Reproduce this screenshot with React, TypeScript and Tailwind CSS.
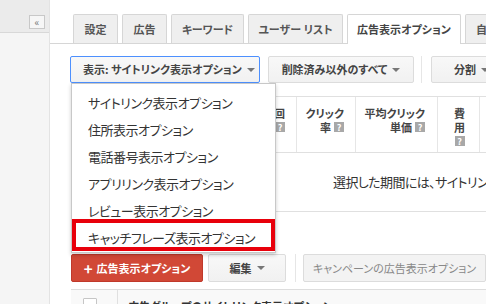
import React from "react";

const Q = () => (
  <span className="inline-flex items-center justify-center w-[10px] h-[10px] shrink-0 bg-[#a8a8a8] text-white text-[9px] leading-none font-bold">?</span>
);

const Caret = () => (
  <span className="inline-block ml-[5px] w-0 h-0 border-l-[4px] border-r-[4px] border-t-[4px] border-l-transparent border-r-transparent border-t-[#777] align-middle" />
);

const HeadCell = ({ w, pr, l1, l2 }: { w: string; pr: string; l1: string; l2: string }) => (
  <div className={`${w} ${pr} shrink-0 border-r border-[#e6e6e6] flex flex-col items-end pt-[9px]`}>
    <div className="h-[14px] flex items-center whitespace-nowrap">{l1}</div>
    <div className="h-[14px] flex items-center gap-[3px] whitespace-nowrap">
      <span>{l2}</span>
      <Q />
    </div>
  </div>
);

export default function App() {
  const items = [
    "サイトリンク表示オプション",
    "住所表示オプション",
    "電話番号表示オプション",
    "アプリリンク表示オプション",
    "レビュー表示オプション",
  ];
  return (
    <div className="w-[486px] h-[304px] overflow-hidden flex bg-white font-['Noto_Sans_CJK_JP',sans-serif] [font-feature-settings:'palt'] text-[#333]">
      {/* sidebar */}
      <div className="w-[50px] shrink-0 flex flex-col border-r border-[#e3e3e3]">
        <div className="h-[33px] bg-[#ebebeb] border-b border-[#d8d8d8] flex justify-end items-start pt-[15px] pr-[4px]">
          <div className="w-[16px] h-[14px] border border-[#c8c8c8] bg-[#f6f6f6] flex items-center justify-center text-[10px] leading-none text-[#777]">«</div>
        </div>
        <div className="flex-1 bg-[#f5f5f5]" />
      </div>

      {/* main */}
      <div className="relative flex-1 flex flex-col min-w-0 overflow-hidden">
        {/* tabs */}
        <div className="h-[44px] shrink-0 border-b border-[#d6d6d6] flex items-end gap-[4px] pl-[23px] text-[11px] font-bold text-[#555]">
          <div className="w-[45px] shrink-0 h-[29px] bg-[#efefef] border border-b-0 border-[#d6d6d6] rounded-t-[2px] flex items-center justify-center">設定</div>
          <div className="w-[45px] shrink-0 h-[29px] bg-[#efefef] border border-b-0 border-[#d6d6d6] rounded-t-[2px] flex items-center justify-center">広告</div>
          <div className="w-[73px] shrink-0 h-[29px] bg-[#efefef] border border-b-0 border-[#d6d6d6] rounded-t-[2px] flex items-center justify-center">キーワード</div>
          <div className="w-[95px] shrink-0 h-[29px] bg-[#efefef] border border-b-0 border-[#d6d6d6] rounded-t-[2px] flex items-center justify-center">ユーザー リスト</div>
          <div className="w-[114px] shrink-0 h-[30px] -mb-px bg-white border border-b-0 border-[#d6d6d6] rounded-t-[2px] flex items-center justify-center text-[#444]">広告表示オプション</div>
          <div className="w-[70px] shrink-0 h-[29px] bg-[#efefef] border border-b-0 border-[#d6d6d6] rounded-t-[2px] flex items-center pl-[10px] whitespace-nowrap">自動入札</div>
        </div>

        {/* toolbar */}
        <div className="mt-[12px] h-[27px] shrink-0 flex items-stretch pl-[20px] text-[11px] font-bold text-[#444]">
          <div className="w-[190px] shrink-0 border border-[#4d90fe] rounded-[2px] bg-gradient-to-b from-[#f8f8f8] to-[#f1f1f1] flex items-center pl-[12px]">
            表示: サイトリンク表示オプション<Caret />
          </div>
          <div className="ml-[8px] w-[146px] shrink-0 border border-[#dcdcdc] rounded-[2px] bg-gradient-to-b from-[#f8f8f8] to-[#f1f1f1] flex items-center justify-center">
            削除済み以外のすべて<Caret />
          </div>
          <div className="ml-[7px] w-px shrink-0 bg-[#e6e6e6]" />
          <div className="ml-[9px] w-[80px] shrink-0 border border-[#dcdcdc] rounded-[2px] bg-gradient-to-b from-[#f8f8f8] to-[#f1f1f1] flex items-center pl-[22px]">
            分割<Caret />
          </div>
        </div>

        {/* table header */}
        <div className="mt-[13px] ml-[21px] h-[57px] shrink-0 border-t border-b border-[#e0e0e0] flex text-[11px] leading-[13px] font-bold text-[#444]">
          <HeadCell w="w-[226px]" pr="pr-[11px]" l1="表示回" l2="数" />
          <HeadCell w="w-[59px]" pr="pr-[11px]" l1="クリック" l2="率" />
          <HeadCell w="w-[82px]" pr="pr-[12px]" l1="平均クリック" l2="単価" />
          <div className="w-[42px] shrink-0 border-r border-[#e6e6e6] flex flex-col items-center pt-[9px] pl-[2px]">
            <div className="h-[14px] flex items-center">費</div>
            <div className="h-[14px] flex items-center">用</div>
            <div className="h-[14px] flex items-center"><Q /></div>
          </div>
          <div className="flex-1" />
        </div>

        {/* empty message */}
        <div className="ml-[21px] h-[59px] shrink-0 border-b border-[#e0e0e0] flex items-center pl-[262px] text-[13px] tracking-[-0.6px] text-[#333] whitespace-nowrap overflow-hidden">
          選択した期間には、サイトリンク表示オプションはありません。
        </div>

        {/* bottom toolbar */}
        <div className="mt-[42px] ml-[21px] h-[28px] shrink-0 flex items-stretch text-[11px] font-bold">
          <div className="w-[132px] shrink-0 bg-[#d14836] border border-[#c0392b] rounded-[2px] text-white flex items-center justify-center">
            <span className="text-[15px] leading-none mr-[4px] font-bold">+</span>広告表示オプション
          </div>
          <div className="ml-[5px] w-[78px] shrink-0 border border-[#dcdcdc] rounded-[2px] bg-gradient-to-b from-[#f8f8f8] to-[#f1f1f1] text-[#444] flex items-center justify-center">
            編集<Caret />
          </div>
          <div className="ml-[9px] w-px shrink-0 bg-[#e6e6e6]" />
          <div className="ml-[7px] w-[183px] shrink-0 border border-[#dcdcdc] rounded-[2px] bg-[#f3f3f3] text-[#888] font-normal flex items-center justify-center">
            キャンペーンの広告表示オプション
          </div>
        </div>

        {/* table row */}
        <div className="mt-[7px] ml-[21px] h-[30px] shrink-0 border-t border-[#dddddd] bg-[#f9f9f9] flex text-[11px] font-bold text-[#333]">
          <div className="w-[47px] shrink-0 border-r border-[#e0e0e0] pl-[12px] pt-[8px]">
            <div className="w-[14px] h-[14px] border border-[#c6c6c6] bg-white rounded-[1px]" />
          </div>
          <div className="pl-[10px] pt-[8px] whitespace-nowrap">広告グループのサイトリンク表示オプション</div>
        </div>

        {/* dropdown */}
        <div className="absolute left-[21px] top-[83px] w-[205px] bg-white border border-[#c8c8c8] shadow-[0_2px_4px_rgba(0,0,0,0.2)] pt-[5px] pb-[1px] text-[13px] tracking-[-0.5px] text-[#333]">
          {items.map((t) => (
            <div key={t} className="h-[27px] flex items-center pl-[16px] whitespace-nowrap">{t}</div>
          ))}
          <div className="relative h-[27px] flex items-center pl-[16px] whitespace-nowrap">
            キャッチフレーズ表示オプション
            <div className="absolute left-0 right-0 top-[-5px] bottom-0 border-[4px] border-[#e8000b]" />
          </div>
        </div>
      </div>
    </div>
  );
}
